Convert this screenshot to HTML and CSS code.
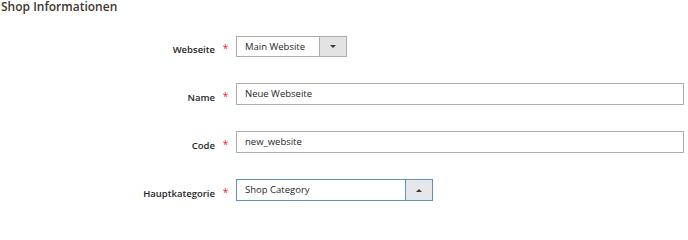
FILE: index.html
```html
<!DOCTYPE html>
<html lang="de">
<head>
<meta charset="utf-8">
<title>Shop Informationen</title>
<link rel="stylesheet" href="styles.css">
</head>
<body>
<div class="page">
  <h2 class="section-title">Shop Informationen</h2>
  <div class="form">
    <div class="field">
      <label class="label">Webseite</label>
      <span class="req">*</span>
      <div class="select select-small">
        <span class="select-value">Main Website</span>
        <span class="select-btn"><span class="tri-down"></span></span>
      </div>
    </div>
    <div class="field">
      <label class="label">Name</label>
      <span class="req">*</span>
      <div class="input">Neue Webseite</div>
    </div>
    <div class="field">
      <label class="label">Code</label>
      <span class="req">*</span>
      <div class="input">new_website</div>
    </div>
    <div class="field">
      <label class="label">Hauptkategorie</label>
      <span class="req">*</span>
      <div class="select select-medium active">
        <span class="select-value">Shop Category</span>
        <span class="select-btn"><span class="tri-up"></span></span>
      </div>
    </div>
  </div>
</div>
</body>
</html>
```

FILE: styles.css
```css
html, body {
  margin: 0;
  padding: 0;
  background: #ffffff;
}
.page {
  font-family: "Open Sans", "Noto Sans", sans-serif;
  color: #303030;
  padding-left: 1px;
  padding-top: 1px;
}
.section-title {
  margin: 0;
  font-size: 12px;
  font-weight: 600;
  line-height: 12px;
  color: #41362f;
}
.form {
  display: flex;
  flex-direction: column;
  gap: 26px;
  padding-top: 22px;
}
.field {
  display: grid;
  grid-template-columns: 214px 21px 448px;
  align-items: center;
  height: 22px;
}
.label {
  text-align: right;
  font-size: 9.5px;
  font-weight: 600;
  color: #262626;
  padding-top: 6px;
}
.req {
  text-align: center;
  color: #e22626;
  font-size: 10px;
  line-height: 10px;
  padding-top: 3px;
}
.input {
  box-sizing: border-box;
  height: 22px;
  border: 1px solid #adadad;
  font-size: 9.5px;
  line-height: 20px;
  padding-left: 8px;
  color: #262626;
}
.select {
  box-sizing: border-box;
  height: 21px;
  border: 1px solid #adadad;
  display: flex;
  font-size: 9.5px;
  line-height: 19px;
}
.select-small { width: 111px; }
.select-medium { width: 197px; height: 22px; line-height: 20px; }
.select.active { border-color: #5f8fc4; }
.select-value {
  flex: 1;
  padding-left: 8px;
  color: #262626;
}
.select-btn {
  width: 26px;
  border-left: 1px solid #adadad;
  background: #e3e3e3;
  display: flex;
  align-items: center;
  justify-content: center;
}
.select.active .select-btn {
  border-left-color: #5f8fc4;
  background: #e4e6e9;
}
.tri-down {
  width: 0;
  height: 0;
  border-left: 3px solid transparent;
  border-right: 3px solid transparent;
  border-top: 3px solid #41362f;
}
.tri-up {
  width: 0;
  height: 0;
  border-left: 3px solid transparent;
  border-right: 3px solid transparent;
  border-bottom: 3px solid #41362f;
}
```
